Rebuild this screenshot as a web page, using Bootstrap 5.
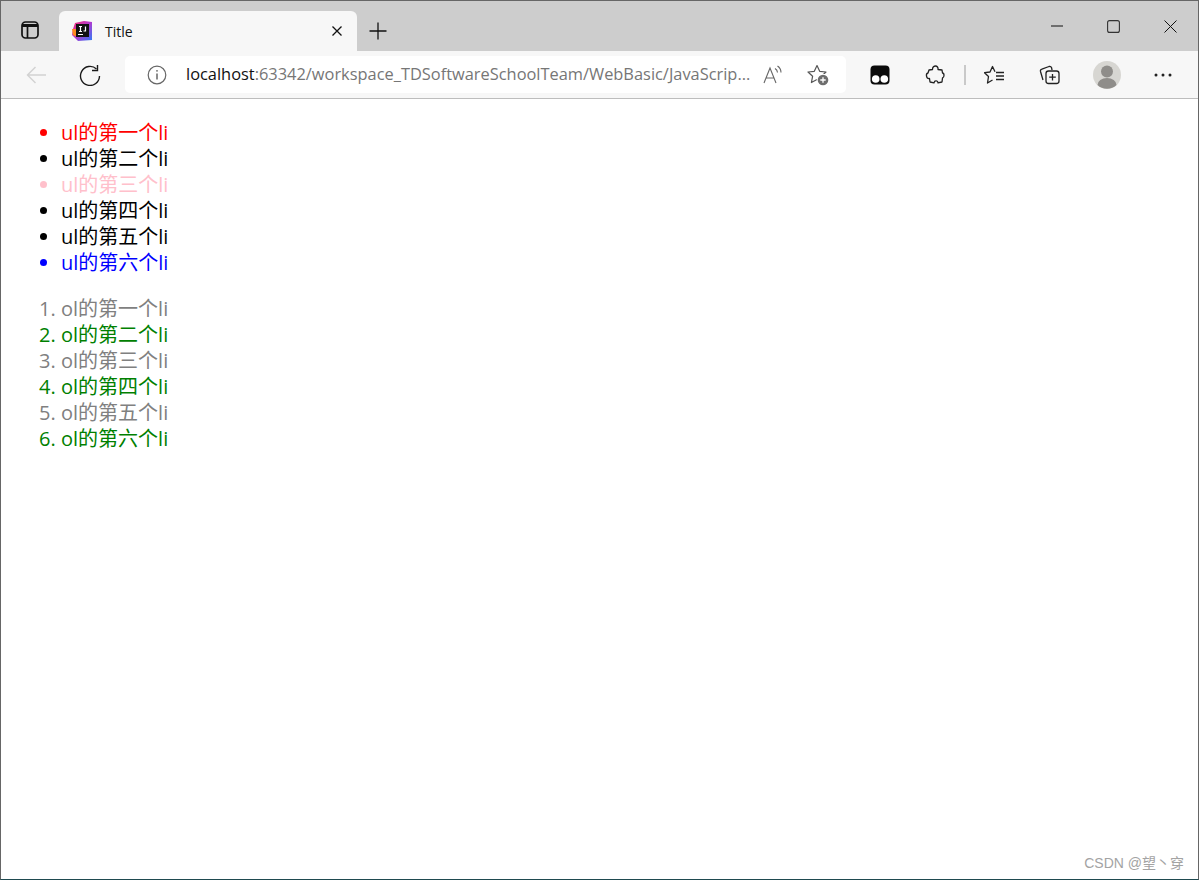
<!DOCTYPE html>
<html lang="zh">
<head>
<meta charset="utf-8">
<title>Title</title>
<link href="https://cdn.jsdelivr.net/npm/bootstrap@5.3.0/dist/css/bootstrap.min.css" rel="stylesheet">
<style>
html,body{height:100%;margin:0;background:#fff}
.frame{height:880px;border:1px solid #666;border-bottom-color:#1f4a50;position:relative;overflow:hidden;font-family:"Segoe UI","Open Sans","Noto Sans","Noto Sans CJK SC",sans-serif}
.tabstrip{height:50px;background:#cdcdcd}
.sidebtn{width:58px}
.tabitem{width:298px;height:40px;background:#f7f7f7;border-radius:6px 6px 0 0;padding:0 15px 0 13px;font-size:14px;color:#111}
.tabname{margin-left:13px;flex:1}
.plusbtn{width:42px;height:40px;padding-bottom:1px}
.winbtns{margin-left:auto;margin-right:-1px;height:50px}
.winbtn{width:57px}
.toolbar{height:48px;background:#f7f7f7;border-bottom:1px solid #bdbdbd}
.backbtn{width:70px;padding-left:25px}
.reloadbtn{width:54px;padding-left:8px}
.omni{width:721px;height:37px;background:#fff;border-radius:5px;padding:0 17px 0 22px;font-size:16px}
.urltext{margin-left:19px;flex:1;white-space:nowrap;color:#767676;font-family:"Segoe UI","Open Sans","Noto Sans",sans-serif;font-size:16.4px;overflow:hidden}
.urltext b{font-weight:400;color:#111}
.omniend{gap:24px}
.tools{padding-left:6px}
.toolcell{width:55px}
.vsep{width:2px;height:20px;background:#c9c9c9;margin:0 1px 0 2px}
.cell-avatar{margin-left:2px}
.cell-more{margin-left:1px}
.pagebody{font-size:20px;line-height:26px;font-family:"Open Sans","Noto Sans","Noto Sans CJK SC",sans-serif;color:#000;padding:21px 0 0 20px}
.pagebody ul,.pagebody ol{margin:0 0 20px;padding-left:40px}
.c-red{color:red}.c-pink{color:pink}.c-blue{color:blue}.c-gray{color:gray}.c-green{color:green}
.mark-csdn{position:absolute;right:14px;bottom:7px;font-size:14px;line-height:18px;color:#a3a3a3;font-family:"Liberation Sans","Noto Sans CJK SC",sans-serif}
svg{display:block}
</style>
</head>
<body>
<div class="frame">
  <div class="tabstrip d-flex align-items-end">
    <div class="sidebtn d-flex justify-content-center align-items-center h-100 pt-2">
      <svg width="20" height="20" viewBox="0 0 20 20" fill="none" stroke="#111" stroke-width="1.700"><rect x="2" y="2" width="16" height="16" rx="3.500"/><path d="M2 5.500h16" stroke-width="3"/><path d="M7.500 6v12"/></svg>
    </div>
    <div class="tabitem d-flex align-items-center">
      <svg width="20" height="20" viewBox="0 0 20 20"><defs><linearGradient id="ij" x1="0" y1="0" x2="1" y2="1"><stop offset="0" stop-color="#ff2d6f"/><stop offset=".5" stop-color="#b13ad0"/><stop offset="1" stop-color="#2f7cf6"/></linearGradient></defs><path d="M3 2 L12 0 L20 1 L20 19 L6 20 L0 14 L1 8Z" fill="url(#ij)"/><path d="M0 8 L5 8 L5 16 L1 14Z" fill="#ff8a1f"/><rect x="4" y="3" width="13" height="13" fill="#111"/><rect x="6" y="13" width="5" height="1" fill="#fff"/><path d="M7 5.500h3M8.500 5.500v5M7 10.500h3M13.500 5.500v4.500h-2" stroke="#fff" stroke-width="1.200" fill="none"/></svg>
      <span class="tabname">Title</span>
      <svg width="10" height="10" viewBox="0 0 10 10" stroke="#111" stroke-width="1.300"><path d="M.5.500l9 9M9.500.500l-9 9"/></svg>
    </div>
    <div class="plusbtn d-flex justify-content-center align-items-center">
      <svg width="18" height="18" viewBox="0 0 18 18" stroke="#111" stroke-width="1.300"><path d="M9 .5v17M.5 9h17"/></svg>
    </div>
    <div class="winbtns d-flex align-items-center">
      <div class="winbtn d-flex justify-content-center"><svg width="12" height="2" stroke="#111" stroke-width="1"><path d="M0 1h12"/></svg></div>
      <div class="winbtn d-flex justify-content-center"><svg width="13" height="13" fill="none" stroke="#333" stroke-width="1.100"><rect x=".6" y=".6" width="11.800" height="11.800" rx="2"/></svg></div>
      <div class="winbtn d-flex justify-content-center"><svg width="13" height="13" stroke="#111" stroke-width="1"><path d="M.5.500l12 12M12.500.500l-12 12"/></svg></div>
    </div>
  </div>
  <div class="toolbar d-flex align-items-center">
    <div class="backbtn d-flex"><svg width="20" height="18" viewBox="0 0 20 18" fill="none" stroke="#d2d2d2" stroke-width="1.400"><path d="M20 9H1.500M9.500 1 1.500 9l8 8"/></svg></div>
    <div class="reloadbtn d-flex"><svg width="22" height="22" viewBox="0 0 22 22" fill="none" stroke="#1a1a1a" stroke-width="1.400"><path d="M17.500 5A9.500 9.500 0 1 0 20.500 12"/><path d="M18.500 1V6.500H13"/></svg></div>
    <div class="omni d-flex align-items-center">
      <svg width="20" height="20" viewBox="0 0 20 20" fill="none" stroke="#666" stroke-width="1.200"><circle cx="10" cy="10" r="8.800"/><path d="M10 8.500v6" stroke-width="1.500"/><circle cx="10" cy="5.800" r=".9" fill="#666" stroke="none"/></svg>
      <div class="urltext"><b>localhost</b>:63342/workspace_TDSoftwareSchoolTeam/WebBasic/JavaScrip...</div>
      <div class="omniend d-flex align-items-center">
        <svg width="20" height="20" viewBox="0 0 20 20" fill="none" stroke="#666" stroke-width="1.100"><path d="M1 18 7 3l6 15M3.200 13h7.600"/><path d="M12 3.500a5 5 0 0 1 2.500 4M14.500 1a8 8 0 0 1 3.500 6.500"/></svg>
        <svg width="22" height="22" viewBox="0 0 22 22" fill="none" stroke="#555" stroke-width="1.200"><path d="M10 1.500 12.700 7.300l6.300.7-4.600 4.300 1.200 6.200L10 15.500l-5.600 3 1.200-6.200L1 8l6.300-.7z" stroke-linejoin="round"/><circle cx="16" cy="16" r="6.300" fill="#fff" stroke="none"/><circle cx="16" cy="16" r="5.300" fill="#6e6e6e" stroke="none"/><path d="M16 13.300v5.400M13.300 16h5.400" stroke="#fff" stroke-width="1.300"/></svg>
      </div>
    </div>
    <div class="tools d-flex align-items-center">
      <div class="toolcell d-flex justify-content-center"><svg width="20" height="20" viewBox="0 0 20 20"><rect x="0.500" y="0.500" width="19" height="19" rx="4" fill="#0b0b0b"/><circle cx="5.700" cy="14" r="3.800" fill="#fff"/><circle cx="14.300" cy="14" r="3.800" fill="#fff"/></svg></div>
      <div class="toolcell d-flex justify-content-center"><svg width="20" height="20" viewBox="0 0 20 20" fill="none" stroke="#222" stroke-width="1.300" stroke-linejoin="round"><path d="M7.500 4.500C7.500 2 9 1 10.500 1 12 1 13.500 2.500 13 4.500L17 5l.5 3c2 0 2 4.500 0 5L17 17l-4 .8c0-2.300-3.500-2.800-4 0L5 17l-.5-3.500c-3.500.5-4-5-1.500-5.500l1-3z"/></svg></div>
      <div class="vsep"></div>
      <div class="toolcell d-flex justify-content-center"><svg width="22" height="20" viewBox="0 0 22 20" fill="none" stroke="#222" stroke-width="1.300" stroke-linejoin="round"><path d="M11 6.800 8.500 1.500 6 7l-5.500.7 4 3.800L3.500 18l5-3"/><path d="M12 7.500h8M12 11h8M12 14.500h8"/></svg></div>
      <div class="toolcell d-flex justify-content-center"><svg width="22" height="20" viewBox="0 0 22 20" fill="none" stroke="#222" stroke-width="1.300"><path d="M4 15 1.500 6.500a2 2 0 0 1 1.400-2.400L10 1.500a2.200 2.200 0 0 1 2.600 1.300L13 5"/><rect x="7" y="6" width="13" height="12.500" rx="2.500"/><path d="M13.500 9v6.500M10.200 12.200h6.600"/></svg></div>
      <div class="toolcell cell-avatar d-flex justify-content-center"><svg width="28" height="28" viewBox="0 0 28 28"><circle cx="14" cy="14" r="14" fill="#d7d6d2"/><circle cx="14" cy="10.500" r="6" fill="#8f8d8a"/><path d="M4.500 24a9.500 7 0 0 1 19 0 14 14 0 0 1-19 0z" fill="#8f8d8a"/></svg></div>
      <div class="toolcell cell-more d-flex justify-content-center"><svg width="18" height="4" viewBox="0 0 18 4" fill="#222"><circle cx="2" cy="2" r="1.500"/><circle cx="9" cy="2" r="1.500"/><circle cx="16" cy="2" r="1.500"/></svg></div>
    </div>
  </div>
  <div class="pagebody">
    <ul>
      <li class="c-red">ul的第一个li</li>
      <li>ul的第二个li</li>
      <li class="c-pink">ul的第三个li</li>
      <li>ul的第四个li</li>
      <li>ul的第五个li</li>
      <li class="c-blue">ul的第六个li</li>
    </ul>
    <ol>
      <li class="c-gray">ol的第一个li</li>
      <li class="c-green">ol的第二个li</li>
      <li class="c-gray">ol的第三个li</li>
      <li class="c-green">ol的第四个li</li>
      <li class="c-gray">ol的第五个li</li>
      <li class="c-green">ol的第六个li</li>
    </ol>
  </div>
  <div class="mark-csdn">CSDN @望丶穿</div>
</div>
<script src="https://cdn.jsdelivr.net/npm/bootstrap@5.3.0/dist/js/bootstrap.bundle.min.js"></script>
</body>
</html>
